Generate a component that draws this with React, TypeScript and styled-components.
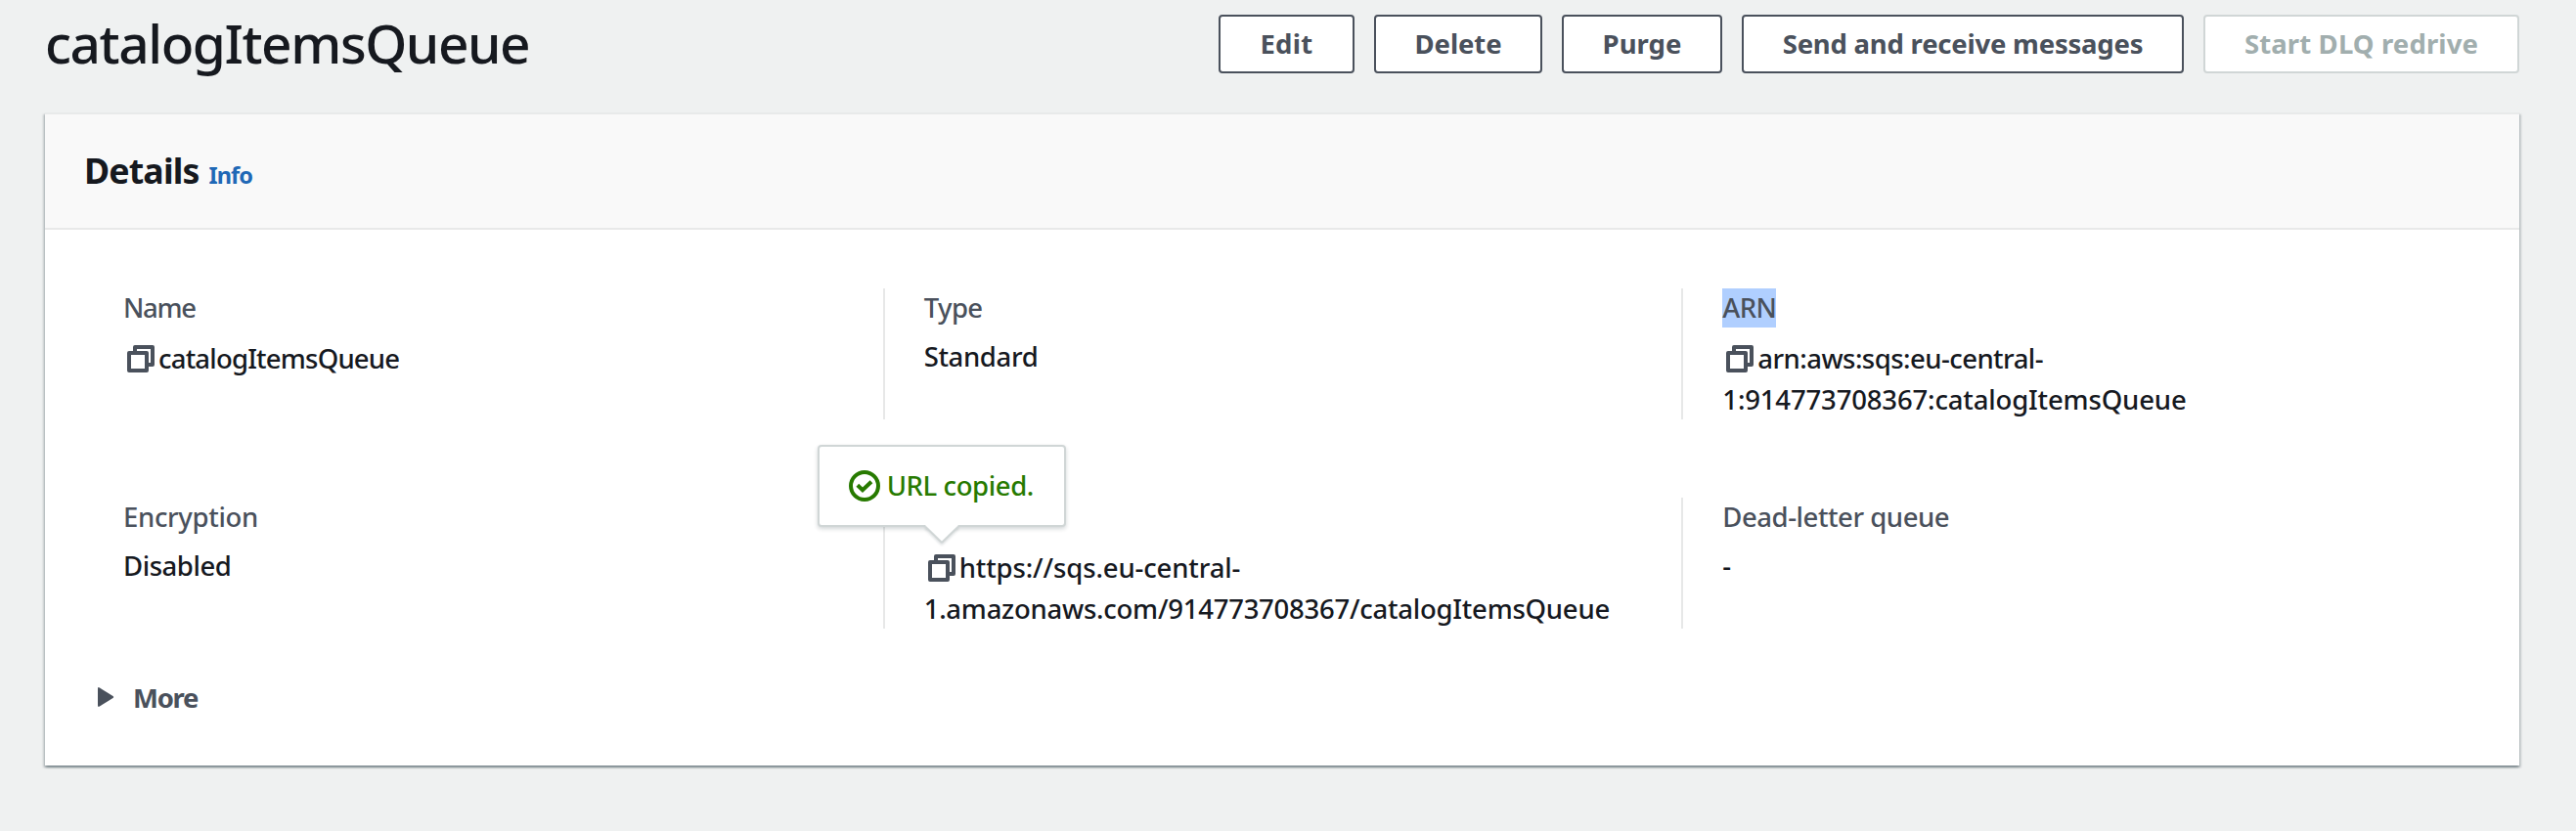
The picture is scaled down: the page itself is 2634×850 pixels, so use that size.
import React from "react";
import styled, { createGlobalStyle } from "styled-components";

const ink = "#16191f";
const slate = "#4a515c";
const green = "#277a00";

const GlobalStyle = createGlobalStyle`
  * { box-sizing: border-box; }
  body {
    margin: 0;
    background: #eff1f1;
    color: ${ink};
    font-family: "Noto Sans", "Open Sans", sans-serif;
    font-size: 27.5px;
    font-weight: 500;
  }
`;

const Page = styled.main`
  height: 850px;
  padding: 15px 58px 0 46px;
  overflow: hidden;
`;

const Toolbar = styled.header`
  display: flex;
  align-items: flex-start;
  justify-content: space-between;
  height: 100px;
`;

const Title = styled.h1`
  margin: -9px 0 0;
  font-size: 55px;
  font-weight: 500;
  line-height: 75px;
  letter-spacing: -1.44px;
`;

const Actions = styled.div`
  display: flex;
  gap: 20px;
`;

const Button = styled.button<{ $width: number; $tracking: number }>`
  width: ${(p) => p.$width}px;
  height: 60px;
  padding: 0 0 1px;
  border: 2px solid ${slate};
  border-radius: 4px;
  background: #fff;
  color: ${slate};
  font: 700 27.5px/56px "Noto Sans", "Open Sans", sans-serif;
  letter-spacing: ${(p) => p.$tracking}px;
  white-space: nowrap;
  &:disabled {
    border-color: #d0d6d6;
    color: #a1aeae;
  }
`;

const Card = styled.section`
  height: 668px;
  border-top: 2px solid #e8eaea;
  background: #fff;
  box-shadow: 0 2px 2px 0 rgba(0, 28, 36, 0.3), 2px 2px 2px 0 rgba(0, 28, 36, 0.15),
    -2px 2px 2px 0 rgba(0, 28, 36, 0.15);
`;

const CardHeader = styled.div`
  display: flex;
  align-items: baseline;
  gap: 10px;
  height: 118px;
  padding: 32px 40px 0;
  border-bottom: 2px solid #e8e9e9;
  background: #f9f9f9;
`;

const CardTitle = styled.h2`
  margin: 0;
  font-size: 35.7px;
  font-weight: 700;
  line-height: 50px;
  letter-spacing: -0.85px;
`;

const InfoLink = styled.a`
  color: #1f68b6;
  font-size: 23.5px;
  font-weight: 700;
  letter-spacing: -0.95px;
`;

const Columns = styled.div`
  display: grid;
  grid-template-columns: repeat(3, 1fr);
  grid-auto-rows: 134px;
  row-gap: 80px;
  padding: 60px 40px 0;
`;

const Field = styled.div`
  padding: 0 40px;
  &:not(:nth-child(3n + 1)) {
    border-left: 2px solid #e7e8e8;
  }
`;

const Label = styled.div<{ $tracking?: number }>`
  height: 50px;
  color: ${slate};
  line-height: 39px;
  letter-spacing: ${(p) => p.$tracking ?? 0}px;
`;

const Selected = styled.span`
  display: inline-block;
  width: 55px;
  height: 40px;
  background: #b0cfff;
`;

const Value = styled.div<{ $tracking?: number }>`
  line-height: 40px;
  letter-spacing: ${(p) => p.$tracking ?? 0}px;
`;

const CopyLine = styled.div<{ $tracking?: number }>`
  display: flex;
  align-items: center;
  height: 42px;
  padding-top: 2px;
  line-height: 42px;
  letter-spacing: ${(p) => p.$tracking ?? 0}px;
  white-space: nowrap;
`;

const CopyButton = styled.span`
  position: relative;
  display: flex;
  width: 36px;
  height: 28px;
  padding-left: 4px;
`;

const Popover = styled.div`
  position: absolute;
  left: -109px;
  bottom: 56px;
  display: flex;
  align-items: center;
  width: 254px;
  height: 84px;
  padding-left: 30px;
  border: 2px solid #d0d6d6;
  border-radius: 4px;
  background: #fff;
  box-shadow: 0 2px 4px rgba(0, 28, 36, 0.18);
  color: ${green};
  line-height: 40px;
`;

const PopoverText = styled.span`
  margin-left: 7px;
  letter-spacing: -0.4px;
`;

const PopoverArrow = styled.svg`
  position: absolute;
  left: 107px;
  top: 80px;
  filter: drop-shadow(0 2px 1px rgba(0, 28, 36, 0.12));
`;

const Expander = styled.div`
  display: flex;
  align-items: center;
  height: 40px;
  margin: 50px 0 0 54px;
  color: ${slate};
  font-weight: 700;
`;

const ExpanderText = styled.span`
  margin-left: 18px;
  letter-spacing: -1.25px;
`;

function CopyIcon() {
  return (
    <svg width="28" height="28" viewBox="0 0 28 28" fill="none" stroke={slate} strokeWidth="4" strokeLinejoin="round">
      <path d="M8 8V2h18v18h-5" />
      <path d="M2 8h18v18H2z" />
    </svg>
  );
}

function CheckIcon() {
  return (
    <svg width="32" height="32" viewBox="0 0 32 32" fill="none" stroke={green} strokeWidth="4">
      <circle cx="16" cy="16" r="14" />
      <path d="M8.800 15.200l5.200 5 9-8.400" />
    </svg>
  );
}

function CopiedPopover() {
  return (
    <Popover role="status">
      <CheckIcon />
      <PopoverText>URL copied.</PopoverText>
      <PopoverArrow width="36" height="22" viewBox="0 0 36 22">
        <path d="M1.500 0h33v2L18 17.500 1.500 2z" fill="#fff" />
        <path d="M1 1.500l16 15.500q1 1 2 0L35 1.500" fill="none" stroke="#d0d6d6" strokeWidth="2" />
      </PopoverArrow>
    </Popover>
  );
}

export default function App() {
  return (
    <>
      <GlobalStyle />
      <Page>
        <Toolbar>
          <Title>catalogItemsQueue</Title>
          <Actions>
            <Button $width={139} $tracking={0.3}>Edit</Button>
            <Button $width={172} $tracking={-0.1}>Delete</Button>
            <Button $width={164} $tracking={0}>Purge</Button>
            <Button $width={452} $tracking={-0.22}>Send and receive messages</Button>
            <Button $width={323} $tracking={0.13} disabled>Start DLQ redrive</Button>
          </Actions>
        </Toolbar>
        <Card>
          <CardHeader>
            <CardTitle>Details</CardTitle>
            <InfoLink>Info</InfoLink>
          </CardHeader>
          <Columns>
            <Field>
              <Label $tracking={-1.3}>Name</Label>
              <CopyLine $tracking={-0.8}>
                <CopyButton><CopyIcon /></CopyButton>
                catalogItemsQueue
              </CopyLine>
            </Field>
            <Field>
              <Label $tracking={-0.6}>Type</Label>
              <Value $tracking={-0.36}>Standard</Value>
            </Field>
            <Field>
              <Label $tracking={-0.6}><Selected>ARN</Selected></Label>
              <CopyLine $tracking={-0.54}>
                <CopyButton><CopyIcon /></CopyButton>
                arn:aws:sqs:eu-central-
              </CopyLine>
              <CopyLine $tracking={-0.16}>1:914773708367:catalogItemsQueue</CopyLine>
            </Field>
            <Field>
              <Label $tracking={-0.33}>Encryption</Label>
              <Value $tracking={-0.44}>Disabled</Value>
            </Field>
            <Field>
              <Label />
              <CopyLine $tracking={-0.13}>
                <CopyButton>
                  <CopyIcon />
                  <CopiedPopover />
                </CopyButton>
                https://sqs.eu-central-
              </CopyLine>
              <CopyLine $tracking={-0.25}>1.amazonaws.com/914773708367/catalogItemsQueue</CopyLine>
            </Field>
            <Field>
              <Label $tracking={-0.45}>Dead-letter queue</Label>
              <Value>-</Value>
            </Field>
          </Columns>
          <Expander>
            <svg width="18" height="20" viewBox="0 0 18 20" fill={slate}>
              <path d="M0 1.500Q0-.6 1.800.5L15.500 9q1.300 1 0 2L1.800 19.500Q0 20.600 0 18.500z" />
            </svg>
            <ExpanderText>More</ExpanderText>
          </Expander>
        </Card>
      </Page>
    </>
  );
}
